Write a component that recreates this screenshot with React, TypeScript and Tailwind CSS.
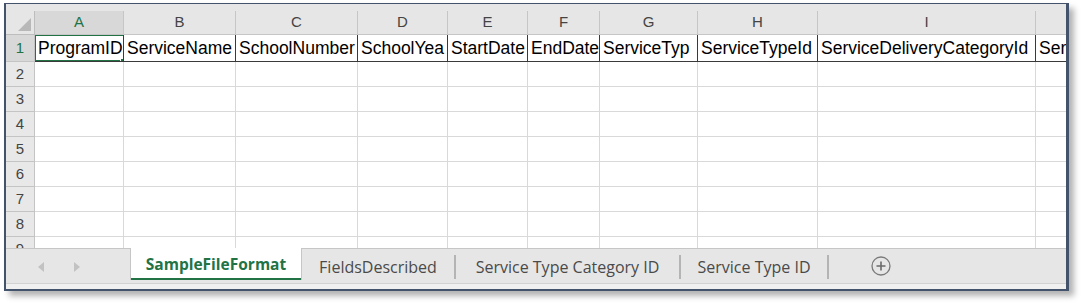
import React from 'react'

interface Column {
  letter: string
  width: string
  title: string
}

// titles are written as far as they show in their cells
const columns: Column[] = [
  { letter: 'A', width: 'w-[89px]', title: 'ProgramID' },
  { letter: 'B', width: 'w-[112px]', title: 'ServiceName' },
  { letter: 'C', width: 'w-[122px]', title: 'SchoolNumber' },
  { letter: 'D', width: 'w-[90px]', title: 'SchoolYea' },
  { letter: 'E', width: 'w-[80px]', title: 'StartDate' },
  { letter: 'F', width: 'w-[72px]', title: 'EndDate' },
  { letter: 'G', width: 'w-[98px]', title: 'ServiceTyp' },
  { letter: 'H', width: 'w-[120px]', title: 'ServiceTypeId' },
  { letter: 'I', width: 'w-[218px]', title: 'ServiceDeliveryCategoryId' },
  { letter: 'J', width: 'w-[40px]', title: 'Serv' },
]

const emptyRows = [2, 3, 4, 5, 6, 7, 8]

const cellFont = { fontFamily: '"Liberation Sans", Arial, sans-serif' }
const uiFont = { fontFamily: '"Open Sans", "Noto Sans", sans-serif' }

const RowHeader = ({ n, active }: { n: number; active?: boolean }) => (
  <div
    className={
      'w-[29px] shrink-0 flex items-center justify-center border-r border-b border-[#c4c4c4] text-[15px] ' +
      (active ? 'bg-[#d8d8d8] text-[#217346]' : 'bg-[#e8e8e8] text-[#444]')
    }
  >
    {n}
  </div>
)

const EmptyRow = ({ n }: { n: number }) => (
  <div className="flex h-[25px] shrink-0">
    <RowHeader n={n} />
    {columns.map(col => (
      <div
        key={col.letter}
        className={col.width + ' shrink-0 border-r border-b border-[#d9d9d9] bg-white last:flex-1 last:border-r-0'}
      />
    ))}
  </div>
)

const Tab = ({ label, width }: { label: string; width: string }) => (
  <div className={width + ' shrink-0 h-[31px] pt-[4px] flex items-center justify-center text-[16px] text-[#4a4a4a]'}>
    {label}
  </div>
)

const Divider = () => <div className="w-[2px] h-[24px] mt-[6px] shrink-0 bg-[#b4b4b4]" />

export default function App() {
  return (
    <div className="w-[1082px] h-[303px] bg-white pt-[3px] pl-[4px]" style={cellFont}>
      <div className="w-[1065px] h-[288px] flex flex-col overflow-hidden border-t border-b-2 border-l-2 border-r-[3px] border-[#43536c] bg-[#e6e6e6] shadow-[5px_5px_6px_rgba(0,0,0,0.3)]">
        {/* top strip above headings */}
        <div className="h-[7px] shrink-0 bg-[#e6e6e6]" />

        {/* column headings */}
        <div className="flex h-[24px] shrink-0">
          <div className="w-[29px] shrink-0 border-r border-b border-[#bdbdbd] bg-[#e6e6e6] flex items-end justify-end p-[3px]">
            <svg width="13" height="13" viewBox="0 0 13 13">
              <polygon points="13,0 13,13 0,13" fill="#b8b8b8" />
            </svg>
          </div>
          {columns.map((col, i) => (
            <div
              key={col.letter}
              className={
                col.width +
                ' shrink-0 flex items-center justify-center border-r border-b border-[#c6c6c6] text-[15px] last:flex-1 last:border-r-0 ' +
                (i === 0 ? 'bg-[#d8d8d8] text-[#217346]' : 'bg-[#e6e6e6] text-[#444]')
              }
            >
              {col.letter === 'J' ? '' : col.letter}
            </div>
          ))}
        </div>

        {/* row 1 with field names */}
        <div className="flex h-[27px] shrink-0">
          <RowHeader n={1} active />
          {columns.map((col, i) => (
            <div
              key={col.letter}
              className={
                col.width +
                ' relative shrink-0 flex items-center bg-white border-b border-r border-[#3a3a3a] pl-[3px] pt-px overflow-hidden whitespace-nowrap text-[17.5px] text-black last:flex-1 last:border-r-0'
              }
            >
              {col.title}
              {i === 0 && (
                <>
                  <div className="absolute -left-px -top-px w-[91px] h-[28px] border-2 border-[#217346]" />
                  <div className="absolute right-[-4px] bottom-[-4px] w-[7px] h-[7px] bg-[#217346] border border-white z-10" />
                </>
              )}
            </div>
          ))}
        </div>

        {emptyRows.map(n => (
          <EmptyRow key={n} n={n} />
        ))}

        {/* row 9, cut off by the sheet tabs */}
        <div className="h-[11px] shrink-0 overflow-hidden">
          <EmptyRow n={9} />
        </div>

        {/* sheet tabs */}
        <div className="flex h-[35px] shrink-0 bg-[#e6e6e6]" style={uiFont}>
          <div className="w-[124px] shrink-0 border-t border-[#c6c6c6] flex items-start pt-[13px]">
            <svg className="ml-[32px]" width="6" height="10" viewBox="0 0 6 10">
              <polygon points="6,0 6,10 0,5" fill="#c2c2c2" />
            </svg>
            <svg className="ml-[30px]" width="6" height="10" viewBox="0 0 6 10">
              <polygon points="0,0 0,10 6,5" fill="#c2c2c2" />
            </svg>
          </div>
          <div className="w-[172px] h-[32px] shrink-0 flex flex-col border-x border-[#c6c6c6] bg-white">
            <div className="flex-1 pt-[4px] flex items-center justify-center font-bold text-[15.5px] text-[#217346]">
              SampleFileFormat
            </div>
            <div className="h-[2px] bg-[#217346]" />
          </div>
          <div className="flex-1 flex border-t border-[#c6c6c6]">
            <Tab label="FieldsDescribed" width="w-[152px]" />
            <Divider />
            <Tab label="Service Type Category ID" width="w-[223px]" />
            <Divider />
            <Tab label="Service Type ID" width="w-[146px]" />
            <Divider />
            <div className="ml-[42px] mt-[7px]">
              <svg width="20" height="20" viewBox="0 0 20 20">
                <circle cx="10" cy="10" r="9" fill="none" stroke="#7a7a7a" strokeWidth="1.3" />
                <path d="M10 5.5v9M5.5 10h9" stroke="#6a6a6a" strokeWidth="1.6" />
              </svg>
            </div>
          </div>
        </div>

        {/* status strip */}
        <div className="flex-1 border-t border-[#d2d2d2] bg-[#f0f0f0]" />
      </div>
    </div>
  )
}
